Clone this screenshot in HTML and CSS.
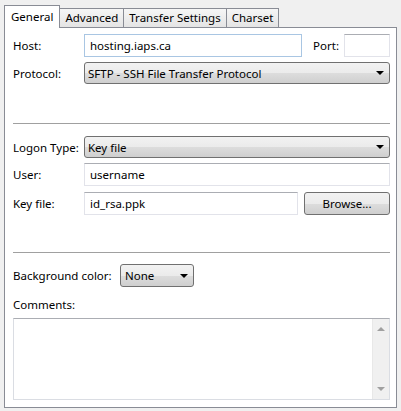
FILE: index.html
```html
<!DOCTYPE html>
<html lang="en">
<head>
    <meta charset="UTF-8" />
    <title>Site settings</title>
    <link rel="stylesheet" href="styles.css">
</head>
<body>
    <div class="tabs">
        <div class="tab active">General</div>
        <div class="tab">Advanced</div>
        <div class="tab">Transfer Settings</div>
        <div class="tab">Charset</div>
    </div>

    <div class="panel">
        <div class="row row-host">
            <label class="label">Host:</label>
            <input class="field field-focus grow" type="text" value="hosting.iaps.ca">
            <label class="label-port">Port:</label>
            <input class="field field-port" type="text" value="">
        </div>
        <div class="row row-protocol">
            <label class="label">Protocol:</label>
            <div class="combo grow">
                <span>SFTP - SSH File Transfer Protocol</span>
                <span class="arrow"></span>
            </div>
        </div>

        <div class="sep sep-first"></div>

        <div class="row row-logon">
            <label class="label">Logon Type:</label>
            <div class="combo grow">
                <span>Key file</span>
                <span class="arrow"></span>
            </div>
        </div>
        <div class="row row-user">
            <label class="label">User:</label>
            <input class="field grow" type="text" value="username">
        </div>
        <div class="row row-key">
            <label class="label">Key file:</label>
            <input class="field grow" type="text" value="id_rsa.ppk">
            <button class="button">Browse...</button>
        </div>

        <div class="sep sep-second"></div>

        <div class="row row-bg">
            <label class="label label-wide">Background color:</label>
            <div class="combo combo-small">
                <span>None</span>
                <span class="arrow"></span>
            </div>
        </div>
        <div class="comments-label">Comments:</div>
        <div class="comments">
            <div class="comments-text"></div>
            <div class="scrollbar">
                <span class="scroll-up"></span>
                <span class="scroll-down"></span>
            </div>
        </div>
    </div>
</body>
</html>
```

FILE: styles.css
```css
body {
    margin: 0;
    padding: 0;
    background-color: #f0f0f0;
    font-family: "Noto Sans", "Open Sans", Arial, sans-serif;
    font-size: 11.5px;
    color: #000;
}

/* tab strip */
.tabs {
    display: flex;
    align-items: flex-end;
    height: 22px;
    padding: 5px 0 0 4px;
}

.tab {
    box-sizing: border-box;
    height: 19px;
    padding: 0 5px;
    margin-right: -1px;
    line-height: 17px;
    border: 1px solid #898c95;
    border-bottom: none;
    background: linear-gradient(#f6f6f6, #e4e4e4);
}

.tab.active {
    position: relative;
    z-index: 1;
    height: 23px;
    margin-bottom: -1px;
    padding: 0 6px;
    line-height: 21px;
    background: #fff;
}

/* main panel */
.panel {
    box-sizing: border-box;
    height: 381px;
    margin: 0 4px;
    padding: 6px 6px 0 8px;
    background-color: #fff;
    border: 1px solid #898c95;
}

.row {
    display: flex;
    align-items: center;
    height: 23px;
}

.row-protocol { margin-top: 5px; height: 22px; }
.row-logon { margin-top: 12px; height: 22px; }
.row-user { margin-top: 5px; }
.row-key { margin-top: 6px; }
.row-bg { margin-top: 11px; }

.label {
    width: 71px;
    flex-shrink: 0;
}

.label-wide {
    width: 107px;
}

.label-port {
    margin: 0 5px 0 11px;
}

.grow {
    flex: 1;
    min-width: 0;
}

.field {
    box-sizing: border-box;
    height: 23px;
    margin: 0;
    padding: 0 5px;
    font: inherit;
    color: #000;
    background: #fff;
    border: 1px solid #e2e3ea;
    border-top-color: #abadb3;
    outline: none;
}

.field-focus {
    border-color: #a9c6e3;
}

.field-port {
    width: 46px;
}

/* combo boxes */
.combo {
    box-sizing: border-box;
    display: flex;
    align-items: center;
    justify-content: space-between;
    height: 100%;
    padding: 0 5px 0 3px;
    border: 1px solid #707070;
    border-radius: 3px;
    background: linear-gradient(#f2f2f2 0%, #ebebeb 50%, #dddddd 50%, #cfcfcf 100%);
}

.combo-small {
    width: 74px;
    padding-left: 4px;
}

.arrow {
    width: 0;
    height: 0;
    border-left: 4px solid transparent;
    border-right: 4px solid transparent;
    border-top: 4px solid #000;
}

.button {
    box-sizing: border-box;
    width: 86px;
    height: 23px;
    margin-left: 6px;
    padding: 0;
    font: inherit;
    color: #000;
    border: 1px solid #707070;
    border-radius: 3px;
    background: linear-gradient(#f2f2f2 0%, #ebebeb 50%, #dddddd 50%, #cfcfcf 100%);
}

.sep {
    height: 1px;
    background-color: #a0a0a0;
}

.sep-first { margin-top: 39px; }
.sep-second { margin-top: 37px; }

.comments-label {
    margin-top: 10px;
    line-height: 15px;
}

.comments {
    box-sizing: border-box;
    display: flex;
    height: 82px;
    margin-top: 6px;
    border: 1px solid #dadde3;
    border-top-color: #abadb3;
}

.comments-text {
    flex: 1;
}

.scrollbar {
    display: flex;
    flex-direction: column;
    justify-content: space-between;
    align-items: center;
    width: 17px;
    padding: 8px 0 8px;
    box-sizing: border-box;
    background-color: #f0f0f0;
    border-left: 1px solid #e8e8e8;
}

.scroll-up {
    border-left: 4px solid transparent;
    border-right: 4px solid transparent;
    border-bottom: 4px solid #a0a0a0;
}

.scroll-down {
    border-left: 4px solid transparent;
    border-right: 4px solid transparent;
    border-top: 4px solid #a0a0a0;
}
```
